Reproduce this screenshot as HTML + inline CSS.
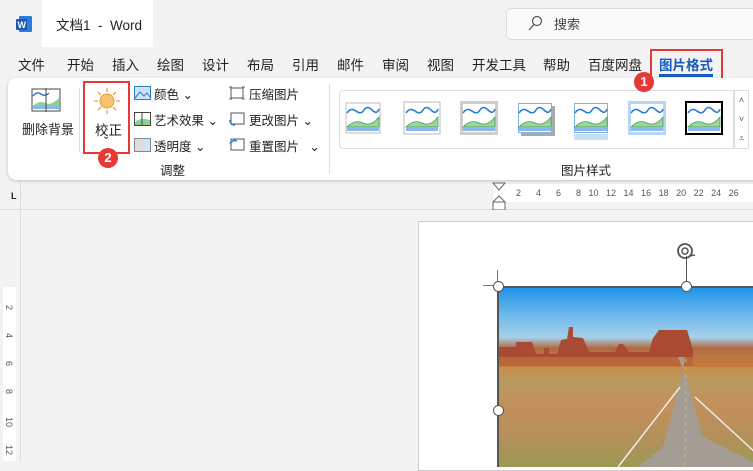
<!DOCTYPE html>
<html><head><meta charset="utf-8"><style>
*{margin:0;padding:0;box-sizing:border-box}
body{width:753px;height:461px;overflow:hidden;background:#f3f3f3;font-family:"Liberation Sans","Noto Sans CJK SC",sans-serif;font-size:13px;color:#222;position:relative}
.a{position:absolute;white-space:nowrap}
.tab{position:absolute;top:54px;font-size:13.5px}
.badge{position:absolute;width:20px;height:20px;border-radius:50%;background:#e53935;color:#fff;font-size:13px;font-weight:bold;text-align:center;line-height:20px}
.sm{font-size:12.5px}
</style></head><body>
<svg class="a" style="left:15px;top:15px" width="18" height="18"><rect x="4" y="1" width="13" height="16" rx="1" fill="#2b7cd3"/><rect x="1" y="4" width="11" height="11" rx="1" fill="#185abd"/><text x="2.5" y="13" font-size="9" fill="#fff" font-weight="bold" font-family="Liberation Sans">W</text></svg>
<div class="a" style="left:42px;top:0;width:111px;height:47px;background:#fff"></div>
<div class="a" style="left:56px;top:14px;font-size:13.5px">文档1 &nbsp;-&nbsp; Word</div>
<div class="a" style="left:506px;top:8px;width:250px;height:32px;background:#fafafa;border:1px solid #ddd;border-radius:5px"></div>
<svg class="a" style="left:527px;top:15px" width="16" height="16"><circle cx="10" cy="6" r="4.5" fill="none" stroke="#555" stroke-width="1.2"/><path d="M7 9.5 2 15" stroke="#555" stroke-width="1.3"/></svg>
<div class="a" style="left:554px;top:14px;color:#444">搜索</div>
<div class="tab" style="left:18px">文件</div><div class="tab" style="left:67px">开始</div><div class="tab" style="left:112px">插入</div><div class="tab" style="left:157px">绘图</div><div class="tab" style="left:202px">设计</div><div class="tab" style="left:247px">布局</div><div class="tab" style="left:292px">引用</div><div class="tab" style="left:337px">邮件</div><div class="tab" style="left:382px">审阅</div><div class="tab" style="left:427px">视图</div><div class="tab" style="left:472px">开发工具</div><div class="tab" style="left:543px">帮助</div><div class="tab" style="left:588px">百度网盘</div>
<div class="tab" style="left:659px;color:#185abd;font-weight:bold">图片格式</div>
<div class="a" style="left:659px;top:74px;width:54px;height:3px;background:#185abd"></div>
<div class="a" style="left:650px;top:49px;width:73px;height:31px;border:2.5px solid #e53935"></div>
<div class="a" style="left:8px;top:78px;width:760px;height:102px;background:#fff;border-radius:8px;box-shadow:0 1px 3px rgba(0,0,0,.2)"></div>
<svg class="a" style="left:31px;top:88px" width="30" height="24"><rect x="1" y="1" width="28" height="22" fill="#fff" stroke="#444"/><path d="M2 8q4-5 8-2t8-1" stroke="#2b7cd3" fill="none" stroke-width="1.5"/><path d="M2 18q6-6 12-3t14-5v8H2z" fill="#8ed18e"/><rect x="2" y="18" width="26" height="3" fill="#8ab8e8"/><line x1="15" y1="0" x2="15" y2="24" stroke="#444"/></svg>
<div class="a" style="left:22px;top:119px">删除背景</div>
<div class="a" style="left:79px;top:88px;width:1px;height:64px;background:#ddd"></div>
<svg class="a" style="left:92px;top:86px" width="30" height="30"><circle cx="15" cy="15" r="7" fill="#f8c471" stroke="#e59a3a"/><g stroke="#f0a030" stroke-width="1.3"><path d="M15 2v4M15 24v4M2 15h4M24 15h4M6 6l3 3M21 21l3 3M24 6l-3 3M6 24l3-3"/></g></svg>
<div class="a" style="left:95px;top:119px;font-size:13.5px">校正</div>
<div class="a" style="left:102px;top:131px;font-size:10px">⌄</div>
<div class="a" style="left:83px;top:81px;width:47px;height:73px;border:2.5px solid #e53935"></div>
<div class="badge" style="left:98px;top:148px">2</div>
<svg class="a" style="left:134px;top:86px" width="17" height="14"><rect x=".5" y=".5" width="16" height="13" fill="#cfe3f7" stroke="#2b7cd3"/><path d="M1 12l5-6 4 4 3-3 3 4" stroke="#2b7cd3" fill="none"/></svg>
<div class="a sm" style="left:154px;top:84px">颜色 ⌄</div>
<svg class="a" style="left:134px;top:112px" width="17" height="14"><rect x=".5" y=".5" width="16" height="13" fill="#fff" stroke="#444"/><path d="M1 10q5-5 15-2v5H1z" fill="#8ed18e"/><line x1="8" y1="0" x2="8" y2="14" stroke="#444"/></svg>
<div class="a sm" style="left:154px;top:110px">艺术效果 ⌄</div>
<svg class="a" style="left:134px;top:138px" width="17" height="14"><rect x=".5" y=".5" width="16" height="13" fill="#ddd" stroke="#888"/><rect x="9" y="1" width="7" height="12" fill="#cfe3f7"/></svg>
<div class="a sm" style="left:154px;top:136px">透明度 ⌄</div>
<svg class="a" style="left:229px;top:86px" width="16" height="14"><rect x="2" y="2" width="12" height="10" fill="none" stroke="#555"/><path d="M0 1h3M13 1h3M0 13h3M13 13h3" stroke="#2b7cd3"/></svg>
<div class="a sm" style="left:249px;top:84px">压缩图片</div>
<svg class="a" style="left:229px;top:112px" width="16" height="14"><rect x="2" y="1" width="13" height="11" fill="none" stroke="#555"/><path d="M1 8q0 5 5 5" stroke="#2b7cd3" fill="none" stroke-width="1.5"/></svg>
<div class="a sm" style="left:249px;top:110px">更改图片 ⌄</div>
<svg class="a" style="left:229px;top:138px" width="16" height="14"><rect x="2" y="1" width="13" height="11" fill="none" stroke="#555"/><path d="M1 6q3-5 7-3" stroke="#2b7cd3" fill="none" stroke-width="1.5"/></svg>
<div class="a sm" style="left:249px;top:136px">重置图片 &nbsp; ⌄</div>
<div class="a sm" style="left:160px;top:160px">调整</div>
<div class="a" style="left:329px;top:84px;width:1px;height:90px;background:#ddd"></div>
<div class="a" style="left:339px;top:90px;width:395px;height:59px;border:1px solid #ddd;border-radius:4px 0 0 4px"></div>
<div class="a" style="left:734px;top:90px;width:15px;height:59px;border:1px solid #ddd;font-size:9px;text-align:center;line-height:19px;color:#555">˄<br>˅<br>⩡</div>
<svg class="a" style="left:345px;top:100px" width="400" height="42">
<defs><g id="p"><rect width="32" height="28" fill="#fff"/><path d="M0 9q4-6 9-2t8-1 8 0 7-1" stroke="#2b7cd3" fill="none" stroke-width="1.6"/><path d="M0 23q8-8 16-4t16-6v10H0z" fill="#9fd49f" stroke="#3c9a4c" stroke-width=".7"/><rect y="23" width="32" height="4" fill="#8ab8e8"/></g></defs>
<g transform="translate(2,4)"><rect x="-1" y="-1" width="34" height="30" fill="none" stroke="#bbb"/><use href="#p"/></g>
<g transform="translate(61,4)"><rect x="-2" y="-2" width="36" height="32" fill="#fff" stroke="#bbb"/><use href="#p"/></g>
<g transform="translate(118,4)"><rect x="-3" y="-3" width="38" height="34" fill="#ccc"/><use href="#p"/></g>
<g transform="translate(174,4)"><rect x="2" y="2" width="34" height="30" fill="#aaa"/><rect x="-1" y="-1" width="34" height="30" fill="#7ab4e8"/><use href="#p"/></g>
<g transform="translate(230,4)"><rect x="-1" y="-1" width="34" height="30" fill="#7ab4e8"/><rect x="-1" y="30" width="34" height="6" fill="#c6e0f5"/><use href="#p"/></g>
<g transform="translate(286,4)"><rect x="-3" y="-3" width="38" height="34" fill="#b6d7f3"/><use href="#p"/></g>
<g transform="translate(343,4)"><rect x="-3" y="-3" width="38" height="34" fill="#000"/><rect x="-1" y="-1" width="34" height="30" fill="#fff"/><use href="#p"/></g>
</svg>
<div class="a sm" style="left:561px;top:160px">图片样式</div>
<div class="badge" style="left:634px;top:72px">1</div>
<div class="a" style="left:11px;top:191px;font-size:9px;font-weight:bold">L</div>
<div class="a" style="left:20px;top:180px;width:1px;height:281px;background:#ddd"></div>
<div class="a" style="left:0;top:209px;width:753px;height:1px;background:#ddd"></div>
<div class="a" style="left:494px;top:184px;width:260px;height:18px;background:#fff"></div>
<svg class="a" style="left:492px;top:182px" width="14" height="28"><path d="M1 1h12L7 8z" fill="#fff" stroke="#666"/><path d="M7 14 1 20v8h12v-8z" fill="#fff" stroke="#666"/><path d="M1 20h12" stroke="#666"/></svg>
<div class="a" style="left:516px;top:188px;font-size:9px;color:#555;word-spacing:5px">2 &nbsp;4 &nbsp;6 &nbsp;8 10 12 14 16 18 20 22 24 26</div>
<div class="a" style="left:3px;top:287px;width:13px;height:174px;background:#fff"></div>
<div class="a" style="left:4px;top:305px;font-size:9px;color:#555;writing-mode:vertical-rl;line-height:10px"><span style="display:inline-block;height:28px">2</span><span style="display:inline-block;height:28px">4</span><span style="display:inline-block;height:28px">6</span><span style="display:inline-block;height:28px">8</span><span style="display:inline-block;height:28px">10</span><span>12</span></div>
<div class="a" style="left:418px;top:221px;width:340px;height:250px;background:#fff;border:1px solid #ccc"></div>
<div class="a" style="left:498px;top:287px;width:260px;height:180px;overflow:hidden;background:linear-gradient(#1c92ea 0%,#6cb8ec 15%,#a6d0ea 28%,#b06a40 34%,#c88a4a 44%,#b89a60 52%,#c4905c 65%,#b3905a 85%,#9a9a55 100%)">
<svg width="260" height="180" style="position:absolute;left:0;top:0"><path d="M0 60h18v-5h16l4 12h8v-6h5v6h8l4-14 6-1 2-12h4v10l10 1 6 14h26l4-8h4l6 8h20l4-14 6-8h28l6 20v16H0z" fill="#a84a34"/><path d="M0 70h260v10H0z" fill="#c0723a" opacity=".7"/><path d="M187 70 184 90 165 160 140 180h125l-60-30-17-60-8-20z" fill="#a39d94"/><path d="M188 72l-1 108" stroke="#e0c020" stroke-dasharray="3 5"/><path d="M120 180l62-80M197 110l63 58" stroke="#eee" stroke-width="1.5"/></svg>
</div>
<div class="a" style="left:498px;top:286px;width:260px;height:2px;background:#555"></div>
<div class="a" style="left:497px;top:287px;width:2px;height:180px;background:#555"></div>
<div class="a" style="left:686px;top:256px;width:1px;height:31px;background:#555"></div>
<svg class="a" style="left:675px;top:240px" width="22" height="22"><circle cx="10" cy="11" r="7" fill="none" stroke="#555" stroke-width="1.8"/><circle cx="10" cy="11" r="3" fill="none" stroke="#555" stroke-width="1.5"/><path d="M14 16l6-1" stroke="#555" stroke-width="1.5"/></svg>
<div class="a" style="left:483px;top:285px;width:15px;height:1px;background:#777"></div>
<div class="a" style="left:497px;top:270px;width:1px;height:16px;background:#777"></div>
<div class="a" style="left:493px;top:281px;width:11px;height:11px;border-radius:50%;background:#fff;border:1.5px solid #555"></div>
<div class="a" style="left:681px;top:281px;width:11px;height:11px;border-radius:50%;background:#fff;border:1.5px solid #555"></div>
<div class="a" style="left:493px;top:405px;width:11px;height:11px;border-radius:50%;background:#fff;border:1.5px solid #555"></div>
</body></html>
